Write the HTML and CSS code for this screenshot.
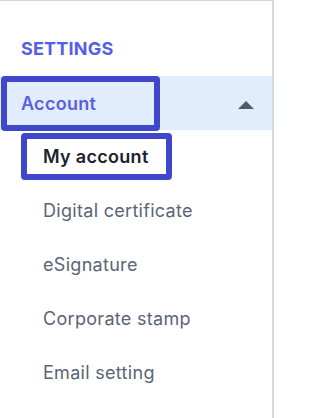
FILE: index.html
```html
<!DOCTYPE html>
<html>
<head>
<meta charset="utf-8">
<link rel="stylesheet" href="styles.css">
</head>
<body>
<nav class="sidebar">
  <div class="section-title">SETTINGS</div>
  <div class="group-row">
    <span class="group-label">Account</span>
    <span class="caret"></span>
  </div>
  <ul class="sub-list">
    <li class="sub-item active"><span class="sub-label">My account</span></li>
    <li class="sub-item"><span class="sub-label">Digital certificate</span></li>
    <li class="sub-item"><span class="sub-label">eSignature</span></li>
    <li class="sub-item"><span class="sub-label">Corporate stamp</span></li>
    <li class="sub-item"><span class="sub-label">Email setting</span></li>
  </ul>
</nav>
</body>
</html>
```
FILE: styles.css
```css
html, body {
  margin: 0;
  padding: 0;
  background: #ffffff;
}
body {
  font-family: Inter, "Noto Sans", sans-serif;
  width: 274px;
  height: 418px;
  overflow: hidden;
}
.sidebar {
  box-sizing: border-box;
  width: 274px;
  height: 418px;
  border-top: 1px solid #d3d8e0;
  border-right: 2px solid #d3d8e0;
  padding-top: 37px;
}
.section-title {
  font-size: 18px;
  font-weight: 700;
  line-height: 22px;
  color: #5360e6;
  padding-left: 21px;
  margin-bottom: 16px;
  letter-spacing: 0.2px;
}
.group-row {
  display: flex;
  align-items: flex-start;
  justify-content: space-between;
  height: 54px;
  background: #e1edfd;
  padding-right: 18px;
}
.group-label {
  box-sizing: border-box;
  display: flex;
  align-items: center;
  width: 159px;
  height: 55px;
  margin-left: 1px;
  padding-left: 14px;
  border: 6px solid #3f47cb;
  border-radius: 4px;
  font-size: 18px;
  font-weight: 600;
  letter-spacing: 0.3px;
  color: #5a5fe0;
}
.caret {
  align-self: center;
  width: 0;
  height: 0;
  margin-top: 3px;
  border-left: 8px solid transparent;
  border-right: 8px solid transparent;
  border-bottom: 8px solid #535a6a;
}
.sub-list {
  list-style: none;
  margin: 0;
  padding: 0;
}
.sub-item {
  display: flex;
  align-items: center;
  height: 54px;
  padding-left: 43px;
  font-size: 18px;
  letter-spacing: 0.3px;
  color: #5b6478;
}
.sub-item.active {
  padding-left: 21px;
  height: 53px;
}
.sub-item.active .sub-label {
  box-sizing: border-box;
  display: flex;
  align-items: center;
  width: 151px;
  height: 47px;
  padding-left: 16px;
  border: 6px solid #3f47cb;
  border-radius: 4px;
  font-weight: 600;
  color: #1d2130;
}
```
